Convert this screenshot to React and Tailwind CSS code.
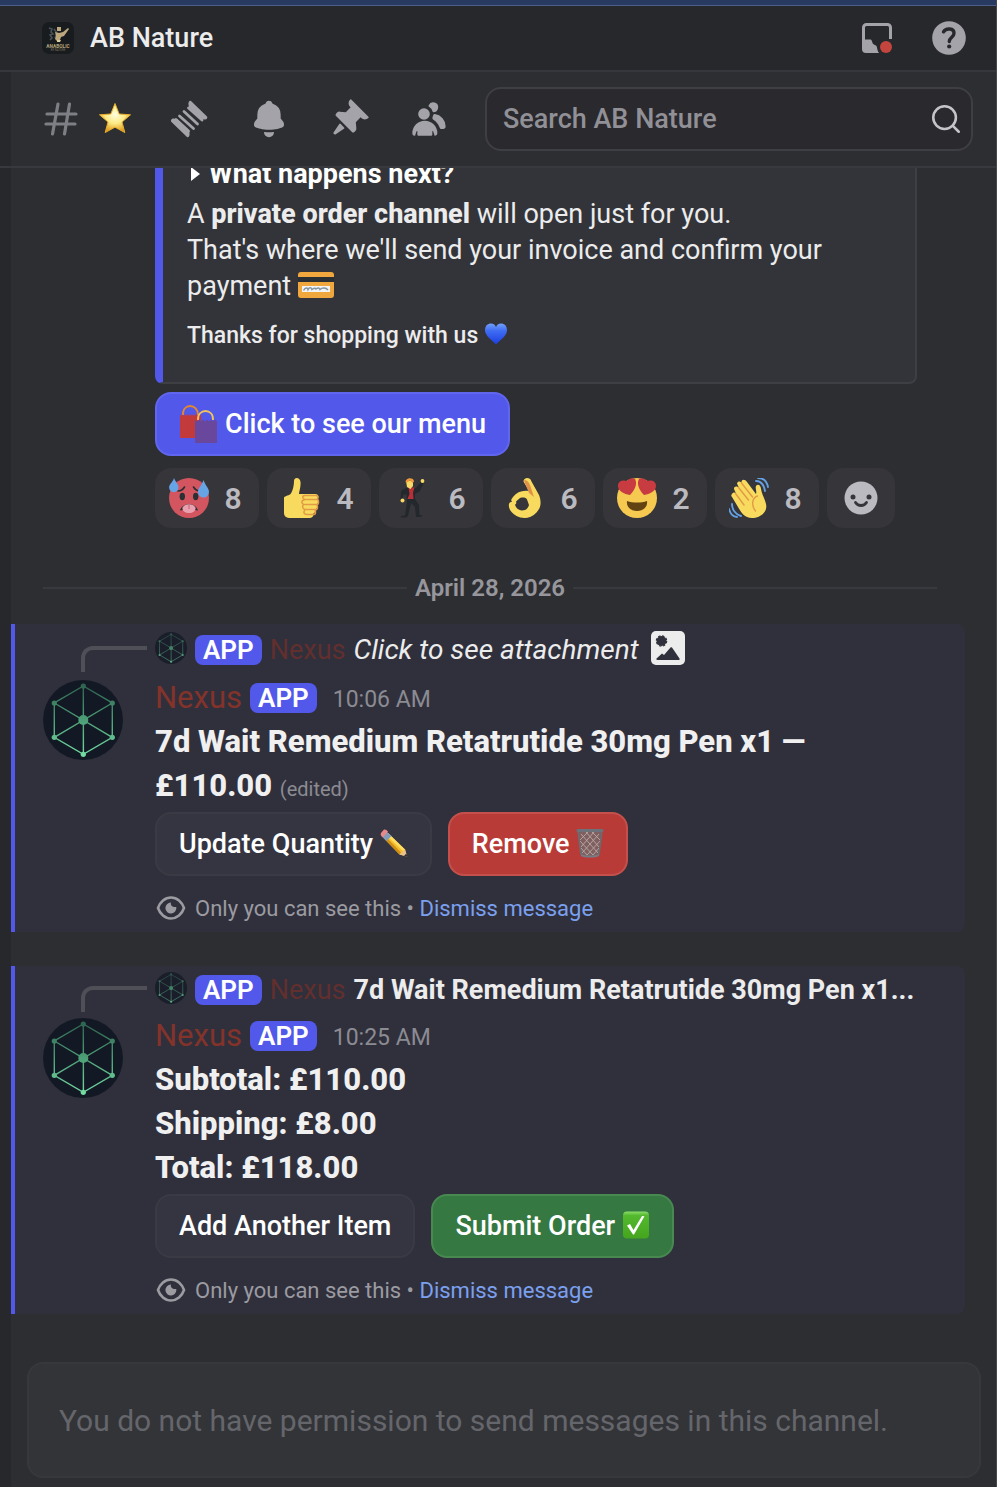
import { Search } from "lucide-react";

const HashIcon = () => (
  <svg viewBox="0 0 40 40" className="size-10 shrink-0 text-[#7e7f85]" fill="none" stroke="currentColor" strokeWidth="3.2" strokeLinecap="round">
    <path d="M17 5 11.500 35M28.500 5 23.500 35M6 15H35M5 25H34" />
  </svg>
);

const StarEmoji = () => (
  <svg viewBox="0 0 40 40" className="size-10 shrink-0">
    <defs>
      <radialGradient id="star" cx="50%" cy="38%" r="62%">
        <stop offset="0" stopColor="#fffde0" />
        <stop offset="0.5" stopColor="#fdea84" />
        <stop offset="1" stopColor="#dd9414" />
      </radialGradient>
    </defs>
    <path d="M20 4.500 24.200 15 35.500 15.800 27 23 29.800 33.500 20 28.200 10.200 33.500 13 23 4.500 15.800 15.800 15Z" fill="url(#star)" stroke="#e8ae2c" strokeWidth="1" strokeLinejoin="round" />
  </svg>
);

const ThreadIcon = () => (
  <svg viewBox="0 0 40 40" className="size-10" fill="currentColor">
    <path d="M19.500 5.500C19 3.500 20.500 1 22 2L38 17.500C39 19 37.500 21 35.500 20.500L32 20 20 8.500Z" />
    <path d="M20.500 34.500C21 36.500 19.500 39 18 38L2.200 22.700C1.200 21.200 2.800 19 4.700 19.500L8.500 20.300 20.300 31.500Z" />
    <path d="M19.500 9 33 21M15 12.500 28.500 25M10.500 17 24.500 29.500M7 20.500 19.500 32" stroke="currentColor" strokeWidth="2.800" strokeLinecap="round" />
  </svg>
);

const BellIcon = () => (
  <svg viewBox="0 0 24 24" className="size-10" fill="currentColor">
    <path d="M9.700 2.890c.18-.07.32-.24.37-.43a2 2 0 0 1 3.860 0c.05.2.19.36.38.43A7 7 0 0 1 19 9.500v2.090c0 .12.05.24.13.33l1.100 1.220a3 3 0 0 1 .77 2.010v.28c0 .67-.34 1.290-.95 1.560-1.310.6-4 1.510-8.050 1.510-4.050 0-6.740-.91-8.050-1.500-.61-.28-.95-.9-.95-1.570v-.28a3 3 0 0 1 .77-2l1.100-1.230a.5.5 0 0 0 .13-.33V9.500a7 7 0 0 1 4.700-6.610ZM9.180 19.840A.16.16 0 0 0 9 20a3 3 0 1 0 6 0c0-.1-.09-.17-.18-.16a24.860 24.860 0 0 1-5.640 0Z" />
  </svg>
);

const PinIcon = () => (
  <svg viewBox="0 0 24 24" className="size-10" fill="currentColor">
    <path d="M19.380 11.380a3 3 0 0 0 4.240 0l.03-.03a.5.5 0 0 0 0-.7L13.350.35a.5.5 0 0 0-.7 0l-.03.03a3 3 0 0 0 0 4.240L13 5l-2.920 2.920-3.650-.34a2 2 0 0 0-1.600.58l-.62.63a1 1 0 0 0 0 1.420l9.580 9.580a1 1 0 0 0 1.420 0l.63-.63a2 2 0 0 0 .58-1.600l-.34-3.640L19 11l.38.38ZM9.070 17.070a.5.5 0 0 1-.08.77l-5.150 3.430a.5.5 0 0 1-.63-.06l-.42-.42a.5.5 0 0 1-.06-.63L6.160 15a.5.5 0 0 1 .77-.08l2.140 2.140Z" />
  </svg>
);

const MembersIcon = () => (
  <svg viewBox="0 0 24 24" className="size-10" fill="currentColor">
    <path d="M14.500 8a3 3 0 1 0-2.700-4.300c-.2.4.06.86.44 1.120a5 5 0 0 1 2.140 3.080c.01.06.06.1.12.1ZM18.440 17.270c.15.43.54.73 1 .73h1.060c.83 0 1.500-.67 1.500-1.500a7.500 7.500 0 0 0-6.500-7.430c-.55-.08-.99.38-1.100.92-.06.3-.15.6-.26.87-.23.58-.05 1.300.47 1.630a9.530 9.530 0 0 1 3.830 4.780ZM12.500 9a3.500 3.500 0 1 1-7 0 3.500 3.500 0 0 1 7 0ZM2 20.500a7.500 7.500 0 0 1 15 0c0 .83-.67 1.500-1.500 1.500a.2.2 0 0 1-.2-.16c-.2-.96-.56-1.870-.88-2.540-.1-.23-.42-.15-.42.1v2.100a.5.5 0 0 1-.5.5h-8a.5.5 0 0 1-.5-.5v-2.100c0-.25-.31-.33-.42-.1-.32.67-.67 1.580-.88 2.540a.2.2 0 0 1-.2.16A1.500 1.500 0 0 1 2 20.500Z" />
  </svg>
);

const InboxIcon = () => (
  <svg viewBox="0 0 30 30" className="size-[30px]">
    <path d="M1.500 18V4.500a3 3 0 0 1 3-3h21a3 3 0 0 1 3 3V16" fill="none" stroke="#a3a3a9" strokeWidth="3" />
    <path d="M0 16.500H8c2 0 2 2 2.500 3.500 .8 1.800 2.800 1.800 4 3C15.500 25 15 28 17 30H4a4 4 0 0 1-4-4Z" fill="#a3a3a9" />
    <circle cx="24" cy="24" r="6" fill="#c4453e" />
  </svg>
);

const HelpIcon = () => (
  <svg viewBox="0 0 34 34" className="size-[34px]">
    <circle cx="17" cy="17" r="16.800" fill="#a3a3a9" />
    <path d="M11.500 10.800C14 6.800 22 7 22 12.300c0 4-4.700 3.800-4.700 8.200" fill="none" stroke="#27282c" strokeWidth="3.400" strokeLinecap="round" />
    <circle cx="17.200" cy="25.500" r="2.100" fill="#27282c" />
  </svg>
);

const ServerLogo = () => (
  <svg viewBox="0 0 32 32" className="size-8">
    <rect width="32" height="32" rx="7" fill="#191c1f" />
    <path d="M7 6l3 1-1 3 2 2-3 1 2 3-2 2M12 7l3 4-2 5" fill="none" stroke="#4b5358" strokeWidth="1.500" />
    <path d="M15 5h4v4h-4zM13 10l4 1 4-1 5-4 1 1-5 7-3 1-1 3-3 1-2-2 1-3Z" fill="#bda87e" />
    <path d="M15 18h4l-1 2h-3z" fill="#e0cf9f" />
    <text x="16" y="25.500" textAnchor="middle" fontSize="4.800" fontWeight="700" fill="#b5a477" fontFamily="Roboto, sans-serif">ANABOLIC</text>
    <text x="16" y="29" textAnchor="middle" fontSize="2.800" fill="#7d7459" fontFamily="Roboto, sans-serif">BY NATURE</text>
  </svg>
);

const NexusAvatar = ({ className }) => (
  <svg viewBox="0 0 80 80" className={className}>
    <defs>
      <linearGradient id="mesh" gradientUnits="userSpaceOnUse" x1="0" y1="5" x2="0" y2="75">
        <stop offset="0" stopColor="#2f6450" />
        <stop offset="0.5" stopColor="#4c9f76" />
        <stop offset="1" stopColor="#74dba3" />
      </linearGradient>
    </defs>
    <circle cx="40" cy="40" r="40" fill="#131924" />
    <path d="M40.300 6 69.300 23V57.300L40.300 74.300 11.300 57.300V23ZM40.300 6 40.400 74.300M11.300 23 69.300 57.300M69.300 23 11.300 57.300" fill="none" stroke="url(#mesh)" strokeWidth="1.400" />
    <g fill="url(#mesh)">
      <circle cx="40.300" cy="6" r="2.600" />
      <circle cx="69.300" cy="23" r="2.600" />
      <circle cx="69.300" cy="57.300" r="2.600" />
      <circle cx="40.300" cy="74.300" r="2.600" />
      <circle cx="11.300" cy="57.300" r="2.600" />
      <circle cx="11.300" cy="23" r="2.600" />
      <circle cx="40.300" cy="40" r="5" />
    </g>
  </svg>
);

const CardEmoji = () => (
  <svg viewBox="0 0 36 26" className="inline-block h-[26px] w-9 align-[-3px]">
    <rect width="36" height="26" rx="3" fill="#f0a73e" />
    <path d="M0 5H36V10H0Z" fill="#292f33" />
    <path d="M4 14H32V20H4Z" fill="#f2f4f5" />
    <path d="M5.500 18.500c2-3.500 4-3 4.500-1 1.500-2.500 3.500-2 4 0 1.500-1 3-2 4-.5 2-1.500 3-1.500 4 .5 2-2 6-2 8 .5" fill="none" stroke="#8295a3" strokeWidth="1.500" />
  </svg>
);

const HeartEmoji = () => (
  <svg viewBox="0 0 24 24" className="inline-block size-6 align-[-3px]">
    <defs>
      <linearGradient id="heart" x1="0" y1="0" x2="0" y2="1">
        <stop offset="0" stopColor="#71a1fa" />
        <stop offset="0.35" stopColor="#3f6cf3" />
        <stop offset="1" stopColor="#1b3ee0" />
      </linearGradient>
    </defs>
    <path d="M12 5C10-.5 1 .5 1 8c0 6 6.500 9.500 11 14.500C16.500 17.500 23 14 23 8 23 .5 14-.5 12 5Z" fill="url(#heart)" />
  </svg>
);

const BagsEmoji = () => (
  <svg viewBox="0 0 40 40" className="size-10">
    <path d="M1 10l2 2 2-2 2 2 2-2 2 2 2-2 2 2 2-2 2 2 2-2 1 2v22H1Z" fill="#c33a3c" />
    <path d="M4 11C3-1 19-1 19 11" fill="none" stroke="#e3882c" strokeWidth="1.800" />
    <path d="M16 16l2 1.500 2-2 2 2 2-2 2 2 2-2 2 2 2-2 2 2 2-2 2 1.500V39H16Z" fill="#68479c" />
    <path d="M19 16C18 4 35 4 34 16" fill="none" stroke="#f3c35b" strokeWidth="1.800" />
  </svg>
);

const PencilEmoji = () => (
  <svg viewBox="0 0 28 28" className="inline-block size-7 align-[-4px]">
    <path d="M8 4 25 20.500 27 27.500 19.500 25.500 3.500 9Z" fill="#f3bf2c" />
    <path d="M8 4 25 20.500 23 22 6 6Z" fill="#ffdc62" />
    <path d="M5 10.500 19.500 25.500 21 23.500 7 9Z" fill="#d08f15" />
    <path d="M6.500 2.500 11.500 7 6.500 12 2 7.500Z" fill="#829bb8" />
    <path d="M3.500 1C5 0 6.500 1 8 2.500L3 8.500C1 7 0 5.500 1 4Z" fill="#e7898a" />
    <path d="M25 20.500 27.300 27.700 19.500 25.500Z" fill="#e9c08f" />
    <path d="M26.300 24.500 27.500 28 24 27Z" fill="#2f2d2b" />
  </svg>
);

const TrashEmoji = () => (
  <svg viewBox="0 0 28 30" className="inline-block h-[30px] w-7 align-[-5px]">
    <path d="M2 3 5 27c2 2 16 2 18 0L26 3Z" fill="#80605f" />
    <path d="M5 6 22 25M10 4 23 19M16 4 24 12M4 13 17 27M5 20 11 27M23 6 6 25M18 4 5 19M12 4 4 12M24 13 11 27M23 20 17 27" stroke="#b9a8a8" strokeWidth="0.900" />
    <path d="M2 3 5 27M26 3 23 27" stroke="#686c73" strokeWidth="1.500" />
    <path d="M5 26c3 2 15 2 18 0v2c-3 2-15 2-18 0Z" fill="#777b83" />
    <rect x="0.500" y="1" width="27" height="3" rx="1.500" fill="#6d7179" />
  </svg>
);

const CheckEmoji = () => (
  <svg viewBox="0 0 28 28" className="inline-block size-7 align-[-4px]">
    <defs>
      <linearGradient id="check" x1="0" y1="0" x2="0" y2="1">
        <stop offset="0" stopColor="#8ddc6b" />
        <stop offset="0.15" stopColor="#53b92e" />
        <stop offset="1" stopColor="#45a51e" />
      </linearGradient>
    </defs>
    <rect x="1" y="0.500" width="26" height="27" rx="4" fill="url(#check)" />
    <path d="M5 14.500 8 13 11.500 19 20 5 22.500 5.200 12 23.500H11Z" fill="#fff" />
  </svg>
);

const HotFace = () => (
  <svg viewBox="0 0 40 40" className="size-10">
    <circle cx="20" cy="20" r="20" fill="#d35560" />
    <path d="M9 13c3 0 5-1.500 6.500-4M24.500 9c1.500 2.500 3.500 4 6.500 4" fill="none" stroke="#292f33" strokeWidth="1.600" strokeLinecap="round" />
    <ellipse cx="13.300" cy="18.500" rx="2.700" ry="3.700" fill="#292f33" />
    <ellipse cx="26.700" cy="18.500" rx="2.700" ry="3.700" fill="#292f33" />
    <path d="M11 32.500C13 24 27 24 29 32.500 25 31 15 31 11 32.500Z" fill="#292f33" />
    <path d="M13.500 29.500c2-4.500 11-4.500 13 0 .5 3-2.500 5.500-6.500 5.500s-7-2.500-6.500-5.500Z" fill="#eaa0ae" />
    <path d="M20 26.500V31" stroke="#c8606f" strokeWidth="1" />
    <path d="M5 0c2 5 4.500 6 4.500 9.500a4.700 4.700 0 0 1-9.400 0C.1 6 3.500 5 5 0ZM34.500 2c2 6 5.500 8 5.500 12a5.500 5.500 0 0 1-11 0c0-4 3.500-6 5.500-12Z" fill="#66a4e5" />
  </svg>
);

const ThumbsUp = () => (
  <svg viewBox="0 0 40 40" className="size-10">
    <path d="M3 20c0-2 4-2 6.500-4C12 13 13 7 13 3c0-4 6-4 6.500 1 .5 5-1.500 9-1.500 12h16c3.500 0 4.500 3 2.500 5 1.500 1.500 1.500 4-.5 5 1.500 1.500 1 4-1 5 1 2-.5 4-2.500 4 .5 3-1.500 5-4 5H10c-5 0-7-2-7-5Z" fill="#f8db5e" />
    <path d="M23 17.500h12c2.500 0 2.500 4 0 4H25M24 21.500h12c2 0 2 5 0 5H25M24.500 26.500H35c2 0 2 5 0 5H25M25 31.500h8c2 0 2 5 0 5H26c-3 0-4-2-2-5-3-1-3-4-1-5-3-1-3-4 1-5-3-1-3-4 0-4" fill="none" stroke="#e19a45" strokeWidth="1.500" strokeLinecap="round" />
  </svg>
);

const DancingMan = () => (
  <svg viewBox="0 0 40 40" className="size-10">
    <path d="M13 10h10l5-6 2.500 1L27 13l-5 3v5l4 6 .5 10 3 .5-1.500 1.500h-5L22 29l-4-4-3 13-1.500 1.500H7.500l1-1.500 3.500-.8L14 24l-.5-8L10 17l-.5 5-2-.5L8 13Z" fill="#23282d" />
    <path d="M15.500 9.500h6l-1.500 5 .5 6.500h-6l2-5Z" fill="#ba3038" />
    <path d="M13 3h7v5l-2.500 3L14 9Z" fill="#f8d965" />
    <path d="M12.500 4c0-5 8.500-5 8.500-.5L19.500 5 17 2.500 13.500 5Z" fill="#f09b3c" />
    <circle cx="29.500" cy="3" r="1.900" fill="#f8d965" />
    <circle cx="9.500" cy="22.500" r="2" fill="#f8d965" />
  </svg>
);

const OkHand = () => (
  <svg viewBox="0 0 40 40" className="size-10">
    <path d="M18.500 3.500c0-4 6.500-5 8 0L34 17c3 8 1.500 13-2.500 17.500-6 6.500-14 6.500-20 3.500C6 35 3 30 4 26c.5-2 2-2 3-2-1.500-2-.5-3 1-5 4-5 9-7 16-6Z" fill="#f8db5e" />
    <path d="M19 2.500c3-1 5 2 6.500 6L29 19 24 15Z" fill="#e0914a" />
    <path d="M11 23.500 15 20c3-1 6-.5 7 1.500l2 5.500c-1 4-4 5.500-7 5.500s-6-2-7-6c1.500-.5 1.500-2 1-3Z" fill="#36353a" />
  </svg>
);

const HeartEyes = () => (
  <svg viewBox="0 0 40 40" className="size-10">
    <circle cx="20" cy="20" r="20" fill="#f6c950" />
    <path d="M10 23c6 2 14 2 20 0 1 6-4 10-10 10s-11-4-10-10Z" fill="#624312" />
    <path d="M18 1c-3-2-7 0-8 2-3-1-9-1-9 5 0 5 6 8 12 9C17 13 21 6 18 1ZM22 1c3-2 7 0 8 2 3-1 9-1 9 5 0 5-6 8-12 9C23 13 19 6 22 1Z" fill="#c83b40" />
  </svg>
);

const WavingHand = () => (
  <svg viewBox="0 0 40 40" className="size-10">
    <path d="M3 16c1-2 3-2 4-.5L5 11c0-3 3-3 5-1L8 5.500C9 3 11 3 12.500 5 12 1 16 1 18 4l9 12c1-3-1-6 0-8 2-3 5 0 5 3 1 6 4 10 5 15 2 8-6 14-14 14C15 40 12 34 9 29L3 19c-1-1-1-2 0-3Z" fill="#f8db5e" />
    <path d="M6.500 15.500 15 27M9.500 9.500 19.500 22M12.500 5 23.500 19M26.500 33C22 27 23 20 28.500 18" fill="none" stroke="#e19a45" strokeWidth="1.400" strokeLinecap="round" />
    <path d="M27 3c5 0 8 4 9 10M29 0c6 0 9 4 10 9M3 26c0 5 3 10 9 12M0 31c1 4 4 8 8 8" fill="none" stroke="#64a1e3" strokeWidth="1.900" strokeLinecap="round" />
  </svg>
);

const SmileIcon = () => (
  <svg viewBox="0 0 34 34" className="size-[34px]">
    <circle cx="17" cy="17" r="16.500" fill="#babac0" />
    <circle cx="9" cy="16" r="2.500" fill="#36353a" />
    <circle cx="25" cy="16" r="2.500" fill="#36353a" />
    <path d="M11.500 21.500c2.500 4 8.500 4 11 0" fill="none" stroke="#36353a" strokeWidth="2.800" strokeLinecap="round" />
  </svg>
);

const ImageIcon = () => (
  <svg viewBox="0 0 34 34" className="mb-1 size-[34px] shrink-0">
    <rect width="34" height="34" rx="5" fill="#ececed" />
    <path d="M5.500 27.500 11 22.500l2 1.500 6.500-7.500c.5-.5 1-.5 1.500 0l7.500 11c.5.800 0 1.500-.8 1.500H6.500c-1 0-1.500-1-1-1.500Z" fill="#30303c" />
    <circle cx="10.500" cy="10" r="5" fill="#30303c" />
    <circle cx="10.500" cy="10" r="5.200" fill="none" stroke="#30303c" strokeWidth="1.200" strokeDasharray="2.400 1.680" />
  </svg>
);

const EyeIcon = () => (
  <svg viewBox="0 0 30 26" className="h-[26px] w-8">
    <path d="M2 13C4 7 9 2.500 15 2.500S26 7 28 13C26 19 21 23.500 15 23.500S4 19 2 13Z" fill="none" stroke="#9b9ba1" strokeWidth="2.600" />
    <path d="M15 7.500c-.8 2.500 1.500 5.200 5.300 4.500A5.500 5.500 0 1 1 15 7.500Z" fill="#9b9ba1" />
  </svg>
);

const AppBadge = () => (
  <span className="flex h-[30px] shrink-0 items-center rounded-lg bg-[#5258ea] px-2 text-[26px] font-semibold text-white">
    APP
  </span>
);

const Button = ({ color, children }) => (
  <button type="button" className={`flex h-16 cursor-pointer items-center gap-1.5 rounded-2xl border-2 px-[22px] text-[27px] font-medium text-white ${color}`}>
    {children}
  </button>
);

const reactions = [
  { name: "Hot face", icon: <HotFace />, count: 8 },
  { name: "Thumbs up", icon: <ThumbsUp />, count: 4 },
  { name: "Dancing man", icon: <DancingMan />, count: 6 },
  { name: "OK hand", icon: <OkHand />, count: 6 },
  { name: "Heart eyes", icon: <HeartEyes />, count: 2 },
  { name: "Waving hand", icon: <WavingHand />, count: 8 },
];

const tools = [
  { name: "Threads", icon: <ThreadIcon /> },
  { name: "Notification settings", icon: <BellIcon /> },
  { name: "Pinned messages", icon: <PinIcon /> },
  { name: "Member list", icon: <MembersIcon /> },
];

const Message = ({ reply, time, spacing, children, actions }) => (
  <article className="mr-[31px] rounded-r-lg border-l-4 border-[#5258ea] bg-[#30303c] pr-12 pb-1 pl-7">
    <div className={`flex h-9 items-center ${spacing}`}>
      <div className="-mb-1 mt-3.5 ml-[38px] mr-2 w-[66px] shrink-0 self-stretch rounded-tl-xl border-l-4 border-t-4 border-[#4f4f58]" />
      <NexusAvatar className="mr-2 size-8 shrink-0 self-start opacity-75" />
      <AppBadge />
      <span className="ml-2 mr-2 text-[27px] text-[#612f2e]">Nexus</span>
      {reply}
    </div>
    <div className="flex gap-8">
      <NexusAvatar className="mt-1 size-20 shrink-0" />
      <div className="min-w-0 flex-1">
        <header className="flex h-11 items-center">
          <span className="mr-2 text-[31px] text-[#84332a]">Nexus</span>
          <AppBadge />
          <time className="ml-4 pt-1 text-[23px] text-[#8b8b92]">{time}</time>
        </header>
        <div className="text-[31px] leading-11 font-extrabold text-[#f0f0f1]">{children}</div>
        <div className="mt-1 flex gap-4">{actions}</div>
        <footer className="mt-3 flex h-10 items-center text-[22px] text-[#9b9ba1]">
          <EyeIcon />
          <p className="ml-2">
            Only you can see this • <a href="#" className="text-[#7ba0ef]">Dismiss message</a>
          </p>
        </footer>
      </div>
    </div>
  </article>
);

const App = () => {
  return (
    <div className="flex h-screen flex-col overflow-hidden border-r border-[#48494e] bg-[#27282c] font-['Roboto',sans-serif] text-[#ececed]">
      <div className="h-1.5 shrink-0 border-b border-[#4b5f88] bg-[#293a60]" />

      <header className="flex h-[66px] shrink-0 items-center border-b-2 border-[#36373c] pr-[30px] pl-[42px]">
        <ServerLogo />
        <h1 className="ml-4 flex-1 text-[27px] font-medium">AB Nature</h1>
        <button type="button" aria-label="Inbox" className="mr-10 cursor-pointer"><InboxIcon /></button>
        <button type="button" aria-label="Help" className="cursor-pointer"><HelpIcon /></button>
      </header>

      <nav className="shrink-0 border-b-2 border-[#38393e] pl-[11px]">
        <div className="flex h-[94px] items-center bg-[#2d2e32] pr-[23px] pl-[30px]">
          <HashIcon />
          <div className="mr-[34px] ml-3.5"><StarEmoji /></div>
          <div className="mr-9 flex gap-10 text-[#a3a3a9]">
            {tools.map((tool) => (
              <button key={tool.name} type="button" aria-label={tool.name} className="cursor-pointer">
                {tool.icon}
              </button>
            ))}
          </div>
          <label className="flex h-16 min-w-0 flex-1 items-center rounded-2xl border-2 border-[#3e3f44] bg-[#2a292e] pr-2 pl-4">
            <input
              type="text"
              aria-label="Search AB Nature"
              placeholder="Search AB Nature"
              className="min-w-0 flex-1 bg-transparent text-[27px] font-medium outline-none placeholder:text-[#909096]"
            />
            <Search className="size-[34px] text-[#c4c4c9]" strokeWidth={1.8} />
          </label>
        </div>
      </nav>

      <main className="ml-[11px] flex min-h-0 flex-1 flex-col bg-[#2d2e32]">
        <div className="flex min-h-0 flex-1 flex-col justify-end overflow-hidden pb-12">
          <div className="mr-[79px] ml-36 shrink-0">
            {/* Order embed */}
            <div className="rounded-lg border-r-2 border-b-2 border-l-8 border-r-[#3e3f44] border-b-[#3e3f44] border-l-[#5258ea] bg-[#333439] pr-14 pb-7 pl-6 text-[27px] leading-9">
              <h2 className="mb-1 flex items-center gap-2 font-bold text-white">
                <svg viewBox="0 0 10 16" className="ml-1 h-4 w-2.5"><path d="M0 1 9 8 0 15Z" fill="currentColor" /></svg>
                What happens next?
              </h2>
              <p>A <strong className="font-extrabold">private order channel</strong> will open just for you.</p>
              <p>That's where we'll send your invoice and confirm your payment <CardEmoji /></p>
              <p className="mt-3.5 text-[23px] font-medium">Thanks for shopping with us <HeartEmoji /></p>
            </div>

            <div className="mt-2 flex">
              <Button color="border-[#6166ee] bg-[#5258ea]"><BagsEmoji />Click to see our menu</Button>
            </div>

            <div className="mt-3 flex gap-2">
              {reactions.map((reaction) => (
                <button key={reaction.name} type="button" aria-label={reaction.name} className="flex h-15 cursor-pointer items-center gap-3.5 rounded-2xl bg-[#36353a] pr-4 pl-3.5 text-[30px] font-semibold text-[#babac0]">
                  {reaction.icon}
                  <span className="min-w-5 text-center">{reaction.count}</span>
                </button>
              ))}
              <button type="button" aria-label="Add reaction" className="flex h-15 w-17 cursor-pointer items-center justify-center rounded-2xl bg-[#36353a]">
                <SmileIcon />
              </button>
            </div>
          </div>

          <div className="mt-[42px] mr-[59px] mb-[18px] ml-8 flex h-9 shrink-0 items-center gap-2 text-2xl font-semibold text-[#96969c]">
            <div className="h-0.5 flex-1 bg-[#38393e]" />
            April 28, 2026
            <div className="h-0.5 flex-1 bg-[#38393e]" />
          </div>

          <div className="flex shrink-0 flex-col gap-[34px]">
            <Message
              time="10:06 AM"
              spacing="mt-2 mb-2"
              reply={
                <>
                  <em className="mr-3 text-[28px]">Click to see attachment</em>
                  <ImageIcon />
                </>
              }
              actions={
                <>
                  <Button color="border-[#3a3a45] bg-[#353541]"><span>Update Quantity <PencilEmoji /></span></Button>
                  <Button color="border-[#c5504b] bg-[#b83b38]"><span>Remove <TrashEmoji /></span></Button>
                </>
              }
            >
              <p>
                7d Wait Remedium Retatrutide 30mg Pen x1 — £110.00{" "}
                <span className="text-xl font-normal text-[#8b8b92]">(edited)</span>
              </p>
            </Message>

            <Message
              time="10:25 AM"
              spacing="mt-1.5 mb-1.5"
              reply={<strong className="text-[27px] font-bold whitespace-nowrap">7d Wait Remedium Retatrutide 30mg Pen x1...</strong>}
              actions={
                <>
                  <Button color="border-[#3a3a45] bg-[#353541]">Add Another Item</Button>
                  <Button color="border-[#478950] bg-[#357841]"><span>Submit Order <CheckEmoji /></span></Button>
                </>
              }
            >
              <p>Subtotal: £110.00</p>
              <p>Shipping: £8.00</p>
              <p>Total: £118.00</p>
            </Message>
          </div>
        </div>

        <div className="mr-[15px] mb-[9px] ml-4 flex h-[116px] shrink-0 items-center rounded-2xl border-2 border-[#37383c] bg-[#333438] px-[30px]">
          <input
            type="text"
            disabled
            aria-label="Message"
            placeholder="You do not have permission to send messages in this channel."
            className="w-full bg-transparent text-[30px] placeholder:text-[#65666b]"
          />
        </div>
      </main>
    </div>
  );
};

export default App;
